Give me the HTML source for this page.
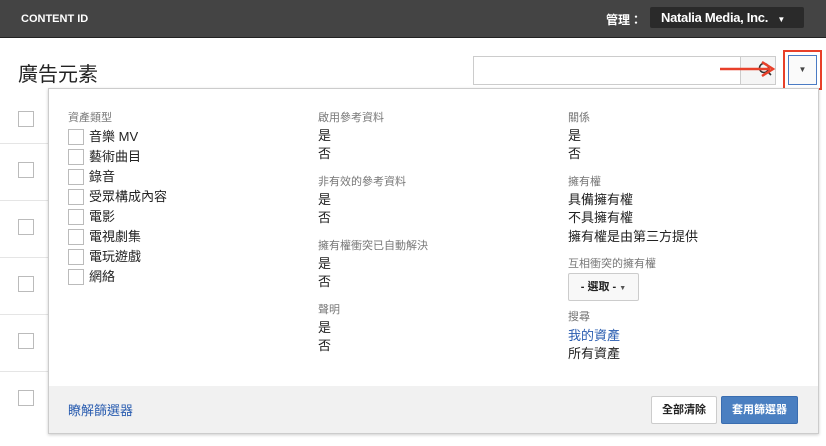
<!DOCTYPE html><html><head><meta charset="utf-8"><style>
*{margin:0;padding:0;box-sizing:border-box}
body{width:826px;height:446px;overflow:hidden;background:#fff;font-family:"Liberation Sans","Noto Sans CJK TC",sans-serif;position:relative;font-size:13px;color:#222}
.hdr{position:absolute;left:0;top:0;width:826px;height:38px;background:#444;border-bottom:1px solid #222}
.a{position:absolute}
.cb{position:absolute;width:16px;height:16px;border:1px solid #bbb;background:#fff}
.ln{position:absolute;left:0;width:48px;height:1px;background:#e5e5e5}
.lbl{color:#777;font-size:11px;height:17px;line-height:17px}
.it{height:18px;line-height:18px}
.c1 .it{height:20px;line-height:20px}
.m{margin-top:11px}
.col{position:absolute;top:110px}
.ib{position:relative;display:inline-block;vertical-align:-4px;margin-right:5px}
</style></head><body>
<div class="hdr">
<div class="a" style="left:21px;top:13px;color:#fff;font-size:11px;font-weight:bold">CONTENT ID</div>
<div class="a" style="left:606px;top:11px;color:#fff;font-size:12px;font-weight:bold">管理：</div>
<div class="a" style="left:650px;top:7px;width:154px;height:21px;background:#2a2a2a;border-radius:2px;color:#fff;font-weight:bold;font-size:13px;line-height:21px;padding-left:11px;letter-spacing:-0.3px">Natalia Media, Inc. <span style="font-size:8px;margin-left:6px">▼</span></div>
</div>
<div class="a" style="left:18px;top:58px;font-size:20px;color:#222">廣告元素</div>
<div class="a" style="left:473px;top:56px;width:268px;height:29px;border:1px solid #ccc"></div>
<div class="a" style="left:740px;top:56px;width:36px;height:29px;border:1px solid #ccc;background:#f5f5f5"></div>
<svg class="a" style="left:720px;top:58px" width="60" height="22"><circle cx="44" cy="10" r="4.5" fill="none" stroke="#333" stroke-width="1.6"/><line x1="47" y1="13" x2="51" y2="17" stroke="#333" stroke-width="1.6"/><line x1="0" y1="11" x2="50" y2="11" stroke="#e8402a" stroke-width="2.5"/><path d="M42 4 L53 11 L42 18" fill="none" stroke="#e8402a" stroke-width="2.5"/></svg>
<div class="a" style="left:783px;top:50px;width:39px;height:40px;border:2px solid #e8402a"></div>
<div class="a" style="left:788px;top:55px;width:29px;height:30px;border:1px solid #4a7bc4;background:#fafafa;font-size:8px;text-align:center;line-height:28px;color:#444">▼</div>
<div class="cb" style="left:18px;top:111px"></div><div class="ln" style="top:143px"></div>
<div class="cb" style="left:18px;top:162px"></div><div class="ln" style="top:200px"></div>
<div class="cb" style="left:18px;top:219px"></div><div class="ln" style="top:257px"></div>
<div class="cb" style="left:18px;top:276px"></div><div class="ln" style="top:314px"></div>
<div class="cb" style="left:18px;top:333px"></div><div class="ln" style="top:371px"></div>
<div class="cb" style="left:18px;top:390px"></div>
<div class="a" style="left:48px;top:88px;width:771px;height:346px;border:1px solid #ccc;background:#fff;box-shadow:0 1px 3px rgba(0,0,0,.2)"></div>
<div class="a" style="left:49px;top:386px;width:769px;height:47px;background:#f1f1f1"></div>
<div class="col c1" style="left:68px">
<div class="lbl">資產類型</div>
<div class="it"><span class="cb ib"></span>音樂 MV</div>
<div class="it"><span class="cb ib"></span>藝術曲目</div>
<div class="it"><span class="cb ib"></span>錄音</div>
<div class="it"><span class="cb ib"></span>受眾構成內容</div>
<div class="it"><span class="cb ib"></span>電影</div>
<div class="it"><span class="cb ib"></span>電視劇集</div>
<div class="it"><span class="cb ib"></span>電玩遊戲</div>
<div class="it"><span class="cb ib"></span>網絡</div>
</div>
<div class="col" style="left:318px">
<div class="lbl">啟用參考資料</div><div class="it">是</div><div class="it">否</div>
<div class="lbl m">非有效的參考資料</div><div class="it">是</div><div class="it">否</div>
<div class="lbl m">擁有權衝突已自動解決</div><div class="it">是</div><div class="it">否</div>
<div class="lbl m">聲明</div><div class="it">是</div><div class="it">否</div>
</div>
<div class="col" style="left:568px">
<div class="lbl">關係</div><div class="it">是</div><div class="it">否</div>
<div class="lbl m">擁有權</div><div class="it">具備擁有權</div><div class="it">不具擁有權</div><div class="it" style="height:20px;line-height:20px">擁有權是由第三方提供</div>
<div class="lbl m" style="margin-top:9px">互相衝突的擁有權</div>
<div style="width:71px;height:28px;border:1px solid #ccc;border-radius:2px;background:#f8f8f8;font-size:11px;font-weight:bold;line-height:26px;text-align:center">- 選取 - <span style="font-size:7px;color:#555">▼</span></div>
<div class="lbl" style="margin-top:8px">搜尋</div><div class="it" style="color:#2a5db0;height:19px;line-height:20px">我的資產</div><div class="it">所有資產</div>
</div>
<div class="a" style="left:68px;top:400px;color:#2a5db0">瞭解篩選器</div>
<div class="a" style="left:651px;top:396px;width:66px;height:28px;border:1px solid #ccc;border-radius:2px;background:#fff;font-size:11px;font-weight:bold;text-align:center;line-height:26px">全部清除</div>
<div class="a" style="left:721px;top:396px;width:77px;height:28px;border:1px solid #3a6db0;border-radius:2px;background:#4a7fc1;color:#fff;font-size:11px;font-weight:bold;text-align:center;line-height:26px">套用篩選器</div>
</body></html>
